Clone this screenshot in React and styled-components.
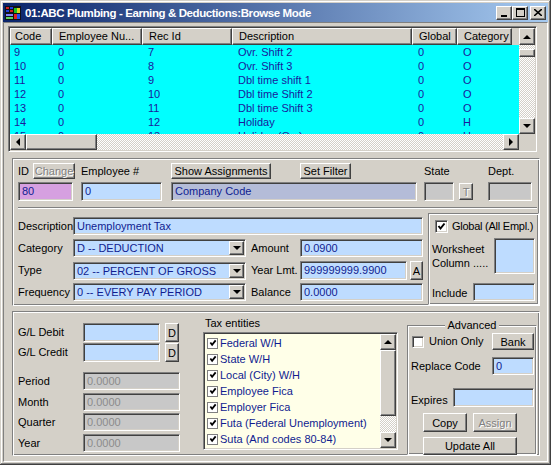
import React from "react"
import styled, { createGlobalStyle, css } from "styled-components"

const GlobalStyle = createGlobalStyle`
  html, body { margin: 0; padding: 0; background: #d4d0c8; }
  body { font-family: "Liberation Sans", Arial, sans-serif; font-size: 11px; color: #000; }
  * { box-sizing: border-box; }
`

// classic 3d edges
const raised = css`
  border: 1px solid;
  border-color: #fff #404040 #404040 #fff;
  box-shadow: inset -1px -1px 0 #808080;
`
const sunken = css`
  border: 1px solid;
  border-color: #808080 #fff #fff #808080;
  box-shadow: inset 1px 1px 0 #404040, inset -1px -1px 0 #d4d0c8;
`
const etched = css`
  border: 1px solid;
  border-color: #808080 #fff #fff #808080;
  box-shadow: inset 1px 1px 0 #fff, inset -1px -1px 0 #808080;
`
const dither = css`
  background-color: #fff;
  background-image: repeating-conic-gradient(#d4d0c8 0 25%, #fff 0 50%);
  background-size: 2px 2px;
`

const Window = styled.div`
  width: 551px;
  height: 465px;
  padding: 3px;
  background: #d4d0c8;
  box-shadow: inset -1px -1px 0 #404040, inset 1px 1px 0 #d4d0c8,
    inset -2px -2px 0 #808080, inset 2px 2px 0 #fff;
  display: flex;
  flex-direction: column;
`

const TitleBar = styled.div`
  height: 19px;
  display: flex;
  align-items: center;
  padding: 0 2px 0 2px;
  background: linear-gradient(to right, #0a246a, #a6caf0);
`

const TitleText = styled.div`
  flex: 1;
  margin-left: 4px;
  color: #fff;
  font: bold 11.5px "Liberation Sans", Arial, sans-serif;
  letter-spacing: -0.4px;
  white-space: nowrap;
`

const CtrlButton = styled.div`
  width: 16px;
  height: 14px;
  background: #d4d0c8;
  ${raised}
  display: flex;
  align-items: center;
  justify-content: center;
  margin-left: ${p => p.$gap || 0}px;
`

const Client = styled.div`
  flex: 1;
  border: 1px solid;
  border-color: #808080 #fff #fff #808080;
  display: flex;
  flex-direction: column;
`

/* ---------- browse grid ---------- */

const Grid = styled.div`
  margin: 3px 0 0 4px;
  width: 529px;
  height: 126px;
  padding: 1px;
  ${sunken}
  display: flex;
  flex-direction: column;
`

const GridBody = styled.div`
  display: flex;
  height: 106px;
`

const GridMain = styled.div`
  width: 509px;
  display: flex;
  flex-direction: column;
  overflow: hidden;
`

const HeaderRow = styled.div`
  display: flex;
  height: 17px;
  flex-shrink: 0;
`

const HeaderCell = styled.div`
  width: ${p => p.$w}px;
  flex-shrink: 0;
  height: 17px;
  ${raised}
  background: #d4d0c8;
  padding-left: ${p => p.$pad}px;
  line-height: 15px;
  white-space: nowrap;
  overflow: hidden;
`

const HeaderFiller = styled.div`
  flex: 1;
  background: #d4d0c8;
`

// the grid shows 6 full rows and the top of a 7th, clipped like the original
const Rows = styled.div`
  flex: 1;
  overflow: hidden;
  background: #00ffff;
`

const Row = styled.div`
  display: flex;
  height: 14px;
`

const Cell = styled.div`
  width: ${p => p.$w}px;
  flex-shrink: 0;
  padding-left: ${p => p.$pad}px;
  line-height: 14px;
  color: #1a1a9c;
  white-space: nowrap;
  overflow: hidden;
`

const VScroll = styled.div`
  width: 16px;
  display: flex;
  flex-direction: column;
`

const ScrollTrack = styled.div`
  flex: 1;
  ${dither}
  display: flex;
  flex-direction: ${p => (p.$horizontal ? "row" : "column")};
`

const ScrollButton = styled.div`
  width: ${p => p.$w || 16}px;
  height: ${p => p.$h || 16}px;
  flex-shrink: 0;
  background: #d4d0c8;
  ${raised}
  display: flex;
  align-items: center;
  justify-content: center;
`

const Thumb = styled.div`
  background: #d4d0c8;
  ${raised}
  width: ${p => p.$w || 16}px;
  height: ${p => p.$h || 16}px;
  margin-top: ${p => p.$mt || 0}px;
  flex-shrink: 0;
`

const HScrollRow = styled.div`
  display: flex;
  height: 16px;
`

const HScroll = styled.div`
  width: 509px;
  display: flex;
`

const Arrow = styled.div`
  width: 0;
  height: 0;
  ${p =>
    p.$dir === "up"
      ? css`border-left: 4px solid transparent; border-right: 4px solid transparent; border-bottom: 4px solid #000;`
      : p.$dir === "down"
      ? css`border-left: 4px solid transparent; border-right: 4px solid transparent; border-top: 4px solid #000;`
      : p.$dir === "left"
      ? css`border-top: 4px solid transparent; border-bottom: 4px solid transparent; border-right: 4px solid #000;`
      : css`border-top: 4px solid transparent; border-bottom: 4px solid transparent; border-left: 4px solid #000;`}
`

/* ---------- form pieces ---------- */

const Panel = styled.div`
  margin: ${p => p.$mt}px 0 0 8px;
  width: 528px;
  height: ${p => p.$h}px;
  ${etched}
  padding: ${p => p.$pt}px 0 0 5px;
  display: flex;
  flex-direction: ${p => p.$dir || "column"};
`

const Line = styled.div`
  display: flex;
  align-items: ${p => p.$align || "center"};
  height: ${p => p.$h || 18}px;
  margin-top: ${p => p.$mt || 0}px;
`

const Label = styled.div`
  width: ${p => (p.$w ? `${p.$w}px` : "auto")};
  margin-left: ${p => p.$ml || 0}px;
  flex-shrink: 0;
  white-space: nowrap;
  line-height: 13px;
  padding-bottom: ${p => p.$pb || 0}px;
  letter-spacing: ${p => p.$ls || 0}px;
`

const Input = styled.div`
  width: ${p => p.$w}px;
  height: ${p => p.$h || 18}px;
  margin-left: ${p => (p.$ml === "auto" ? "auto" : `${p.$ml || 0}px`)};
  margin-right: ${p => p.$mr || 0}px;
  flex-shrink: 0;
  ${sunken}
  background: ${p => p.$bg || "#bedcff"};
  color: ${p => (p.$dim ? "#8c8c8c" : "#101c90")};
  padding: 2px 3px 0;
  line-height: 13px;
  white-space: nowrap;
  overflow: hidden;
`

const Button = styled.div`
  width: ${p => p.$w}px;
  height: ${p => p.$h || 17}px;
  margin-left: ${p => (p.$ml === "auto" ? "auto" : `${p.$ml || 0}px`)};
  margin-right: ${p => p.$mr || 0}px;
  flex-shrink: 0;
  background: #d4d0c8;
  ${raised}
  display: flex;
  align-items: center;
  justify-content: center;
  white-space: nowrap;
  color: ${p => (p.$disabled ? "#808080" : "#000")};
  text-shadow: ${p => (p.$disabled ? "1px 1px 0 #fff" : "none")};
`

const Combo = styled.div`
  width: ${p => p.$w}px;
  height: 18px;
  flex-shrink: 0;
  ${sunken}
  background: #bedcff;
  padding: 1px;
  display: flex;
  color: #101c90;
`

const ComboText = styled.div`
  flex: 1;
  padding: 1px 2px 0;
  line-height: 13px;
  white-space: nowrap;
  overflow: hidden;
`

const ComboButton = styled.div`
  width: 15px;
  background: #d4d0c8;
  ${raised}
  display: flex;
  align-items: center;
  justify-content: center;
`

const Separator = styled.div`
  width: 519px;
  height: 2px;
  margin-top: 6px;
  border-top: 1px solid #808080;
  border-bottom: 1px solid #fff;
`

const Lower = styled.div`
  flex: 1;
  display: flex;
  margin-top: 1px;
`

const FieldCol = styled.div`
  padding-top: 7px;
  display: flex;
  flex-direction: column;
`

const GroupBox = styled.div`
  ${etched}
  width: ${p => p.$w}px;
  margin-top: ${p => p.$mt || 0}px;
  margin-left: ${p => (p.$ml === undefined ? "auto" : `${p.$ml}px`)};
  height: ${p => (p.$h ? `${p.$h}px` : "auto")};
  align-self: ${p => (p.$h ? "flex-start" : "stretch")};
  display: flex;
  flex-direction: column;
`

const GroupTitle = styled.div`
  align-self: center;
  margin-top: -7px;
  padding: 0 3px;
  background: #d4d0c8;
  line-height: 13px;
`

const CheckBox = styled.div`
  width: ${p => p.$s}px;
  height: ${p => p.$s}px;
  flex-shrink: 0;
  margin-left: ${p => p.$ml || 0}px;
  background: #fff;
  ${p => (p.$thin ? css`border: 1px solid #808080;` : sunken)}
  display: flex;
  align-items: center;
  justify-content: center;
`

const Worksheet = styled.div`
  padding: 4px 0 0 3px;
  line-height: 14px;
`

const LeftCol = styled.div`
  width: 162px;
  padding-top: 7px;
  display: flex;
  flex-direction: column;
`

const MidCol = styled.div`
  width: 195px;
  margin-left: 23px;
  display: flex;
  flex-direction: column;
`

const TaxLabel = styled.div`
  height: 14px;
  line-height: 14px;
  padding-left: 2px;
`

const ListBox = styled.div`
  margin-top: 2px;
  height: 118px;
  padding: 1px;
  ${sunken}
  background: #ffffe8;
  display: flex;
`

const ListItems = styled.div`
  flex: 1;
  padding: 1px 0 0 2px;
`

const ListItem = styled.div`
  height: 16px;
  display: flex;
  align-items: center;
  color: #101c90;
  white-space: nowrap;
`

const ItemText = styled.span`
  margin-left: 2px;
`

const Check = ({ size = 9 }) => (
  <svg width={size} height={size} viewBox="0 0 9 9">
    <polyline points="1.5,4 3.5,6.5 7.5,1.5" fill="none" stroke="#000" strokeWidth="2" />
  </svg>
)

const AppIcon = () => (
  <svg width="16" height="14" viewBox="0 0 16 14">
    <rect width="16" height="14" fill="#101018" />
    <rect x="1" y="1" width="3" height="2" fill="#d02020" />
    <rect x="5" y="1" width="3" height="2" fill="#2040e0" />
    <rect x="1" y="4" width="3" height="2" fill="#2040e0" />
    <rect x="5" y="4" width="3" height="2" fill="#d02020" />
    <rect x="9" y="2" width="3" height="5" fill="#20c020" />
    <rect x="12" y="2" width="3" height="5" fill="#e0d020" />
    <rect x="9" y="8" width="3" height="5" fill="#e02020" />
    <rect x="12" y="8" width="3" height="5" fill="#2050f0" />
    <rect x="1" y="8" width="7" height="2" fill="#8080ff" />
    <rect x="1" y="11" width="7" height="2" fill="#60d060" />
  </svg>
)

const columns = [
  { key: "code", title: "Code", w: 42, pad: 4 },
  { key: "emp", title: "Employee Nu...", w: 90, pad: 6 },
  { key: "rec", title: "Rec Id", w: 90, pad: 6 },
  { key: "desc", title: "Description", w: 180, pad: 6 },
  { key: "glob", title: "Global", w: 45, pad: 6 },
  { key: "cat", title: "Category", w: 55, pad: 6 },
]

const rows = [
  ["9", "0", "7", "Ovr. Shift 2", "0", "O"],
  ["10", "0", "8", "Ovr. Shift 3", "0", "O"],
  ["11", "0", "9", "Dbl time shift 1", "0", "O"],
  ["12", "0", "10", "Dbl time Shift 2", "0", "O"],
  ["13", "0", "11", "Dbl time Shift 3", "0", "O"],
  ["14", "0", "12", "Holiday", "0", "H"],
  ["15", "0", "13", "Holiday (Ovr)", "0", "H"],
]

const taxEntities = [
  "Federal W/H",
  "State W/H",
  "Local (City) W/H",
  "Employee Fica",
  "Employer Fica",
  "Futa (Federal Unemployment)",
  "Suta (And codes 80-84)",
]

export default function App() {
  return (
    <>
      <GlobalStyle />
      <Window>
        <TitleBar>
          <AppIcon />
          <TitleText>01:ABC Plumbing - Earning &amp; Deductions:Browse Mode</TitleText>
          <CtrlButton>
            <svg width="8" height="8" viewBox="0 0 8 8"><rect x="1" y="6" width="6" height="2" fill="#000" /></svg>
          </CtrlButton>
          <CtrlButton>
            <svg width="9" height="9" viewBox="0 0 9 9"><rect x="0.5" y="0.5" width="8" height="8" fill="none" stroke="#000" /><rect x="0" y="1" width="9" height="1" fill="#000" /></svg>
          </CtrlButton>
          <CtrlButton $gap={2}>
            <svg width="8" height="7" viewBox="0 0 8 7"><path d="M0 0 L8 7 M8 0 L0 7" stroke="#000" strokeWidth="1.6" /></svg>
          </CtrlButton>
        </TitleBar>

        <Client>
          <Grid>
            <GridBody>
              <GridMain>
                <HeaderRow>
                  {columns.map(c => (
                    <HeaderCell key={c.key} $w={c.w} $pad={c.pad}>{c.title}</HeaderCell>
                  ))}
                  <HeaderFiller />
                </HeaderRow>
                <Rows>
                  {rows.map(r => (
                    <Row key={r[0]}>
                      {r.map((v, i) => (
                        <Cell key={i} $w={columns[i].w} $pad={columns[i].pad}>{v}</Cell>
                      ))}
                    </Row>
                  ))}
                </Rows>
              </GridMain>
              <VScroll>
                <ScrollButton $h={17}><Arrow $dir="up" /></ScrollButton>
                <ScrollTrack>
                  <Thumb $h={8} $mt={4} />
                </ScrollTrack>
                <ScrollButton><Arrow $dir="down" /></ScrollButton>
              </VScroll>
            </GridBody>
            <HScrollRow>
              <HScroll>
                <ScrollButton><Arrow $dir="left" /></ScrollButton>
                <ScrollTrack $horizontal>
                  <Thumb $w={71} />
                </ScrollTrack>
                <ScrollButton><Arrow $dir="right" /></ScrollButton>
              </HScroll>
            </HScrollRow>
          </Grid>

          <Panel $mt={6} $h={148} $pt={4}>
            <Line $h={16}>
              <Label $w={15}>ID</Label>
              <Button $w={42} $h={16} $disabled>Change</Button>
              <Label $w={90} $ml={6}>Employee #</Label>
              <Button $w={100} $h={16}>Show Assignments</Button>
              <Button $w={51} $h={16} $ml={29}>Set Filter</Button>
              <Label $w={64} $ml={73}>State</Label>
              <Label>Dept.</Label>
            </Line>
            <Line $h={19} $mt={3}>
              <Input $w={55} $h={19} $bg="#d6a0e0">80</Input>
              <Input $w={81} $h={19} $ml={8}>0</Input>
              <Input $w={246} $h={19} $ml={9} $bg="#b4bcd8">Company Code</Input>
              <Input $w={30} $h={19} $ml={7} $bg="#c8c8c8" />
              <Button $w={14} $h={17} $ml={5} $disabled>T</Button>
              <Input $w={44} $h={19} $ml={15} $bg="#c8c8c8" />
            </Line>
            <Separator />
            <Lower>
              <FieldCol>
                <Line>
                  <Label $w={55}>Description</Label>
                  <Input $w={350}>Unemployment Tax</Input>
                </Line>
                <Line $mt={4}>
                  <Label $w={55}>Category</Label>
                  <Combo $w={173}>
                    <ComboText>D -- DEDUCTION</ComboText>
                    <ComboButton><Arrow $dir="down" /></ComboButton>
                  </Combo>
                  <Label $w={49} $ml={5}>Amount</Label>
                  <Input $w={123}>0.0900</Input>
                </Line>
                <Line $mt={4} $h={19}>
                  <Label $w={55}>Type</Label>
                  <Combo $w={173}>
                    <ComboText>02 -- PERCENT OF GROSS</ComboText>
                    <ComboButton><Arrow $dir="down" /></ComboButton>
                  </Combo>
                  <Label $w={49} $ml={5}>Year Lmt.</Label>
                  <Input $w={107} $h={19}>999999999.9900</Input>
                  <Button $w={13} $h={19} $ml={3}>A</Button>
                </Line>
                <Line $mt={3}>
                  <Label $w={55}>Frequency</Label>
                  <Combo $w={173}>
                    <ComboText>0 -- EVERY PAY PERIOD</ComboText>
                    <ComboButton><Arrow $dir="down" /></ComboButton>
                  </Combo>
                  <Label $w={49} $ml={5}>Balance</Label>
                  <Input $w={123}>0.0000</Input>
                </Line>
              </FieldCol>
              <GroupBox $w={111} $mt={3}>
                <Line $h={13} $mt={6}>
                  <CheckBox $s={13} $ml={6}><Check /></CheckBox>
                  <Label $ml={4} $ls={-0.25}>Global (All Empl.)</Label>
                </Line>
                <Line $h={36} $mt={5} $align="flex-start">
                  <Worksheet>Worksheet<br />Column .....</Worksheet>
                  <Input $w={41} $h={36} $ml="auto" $mr={3} />
                </Line>
                <Line $mt={9} $align="flex-end">
                  <Label $ml={3} $pb={1}>Include</Label>
                  <Input $w={62} $ml="auto" $mr={3} />
                </Line>
              </GroupBox>
            </Lower>
          </Panel>

          <Panel $mt={5} $h={145} $pt={4} $dir="row">
            <LeftCol>
              <Line $h={19}>
                <Label $w={65}>G/L Debit</Label>
                <Input $w={77} $h={19} />
                <Button $w={14} $h={19} $ml={5}>D</Button>
              </Line>
              <Line $h={19} $mt={1}>
                <Label $w={65}>G/L Credit</Label>
                <Input $w={77} $h={19} />
                <Button $w={14} $h={19} $ml={5}>D</Button>
              </Line>
              <Line $mt={10}>
                <Label $w={65}>Period</Label>
                <Input $w={97} $bg="#c8c8c8" $dim>0.0000</Input>
              </Line>
              <Line $mt={3}>
                <Label $w={65}>Month</Label>
                <Input $w={97} $bg="#c8c8c8" $dim>0.0000</Input>
              </Line>
              <Line $mt={2}>
                <Label $w={65}>Quarter</Label>
                <Input $w={97} $bg="#c8c8c8" $dim>0.0000</Input>
              </Line>
              <Line $mt={3}>
                <Label $w={65}>Year</Label>
                <Input $w={97} $bg="#c8c8c8" $dim>0.0000</Input>
              </Line>
            </LeftCol>

            <MidCol>
              <TaxLabel>Tax entities</TaxLabel>
              <ListBox>
                <ListItems>
                  {taxEntities.map(t => (
                    <ListItem key={t}>
                      <CheckBox $s={11} $thin><Check size={8} /></CheckBox>
                      <ItemText>{t}</ItemText>
                    </ListItem>
                  ))}
                </ListItems>
                <VScroll>
                  <ScrollButton><Arrow $dir="up" /></ScrollButton>
                  <ScrollTrack>
                    <Thumb $h={66} />
                  </ScrollTrack>
                  <ScrollButton><Arrow $dir="down" /></ScrollButton>
                </VScroll>
              </ListBox>
            </MidCol>

            <GroupBox $w={130} $ml={9} $mt={9} $h={130}>
              <GroupTitle>Advanced</GroupTitle>
              <Line $h={17} $mt={1}>
                <CheckBox $s={12} $ml={4} />
                <Label $ml={5}>Union Only</Label>
                <Button $w={42} $ml="auto" $mr={2}>Bank</Button>
              </Line>
              <Line $mt={7}>
                <Label $ml={3}>Replace Code</Label>
                <Input $w={42} $ml="auto" $mr={2}>0</Input>
              </Line>
              <Line $h={19} $mt={13} $align="flex-end">
                <Label $ml={3}>Expires</Label>
                <Input $w={81} $h={19} $ml="auto" $mr={2} />
              </Line>
              <Line $h={19} $mt={6}>
                <Button $w={44} $h={19} $ml={15}>Copy</Button>
                <Button $w={44} $h={19} $ml={6} $disabled>Assign</Button>
              </Line>
              <Line $mt={5}>
                <Button $w={94} $h={18} $ml={15}>Update All</Button>
              </Line>
            </GroupBox>
          </Panel>
        </Client>
      </Window>
    </>
  )
}
